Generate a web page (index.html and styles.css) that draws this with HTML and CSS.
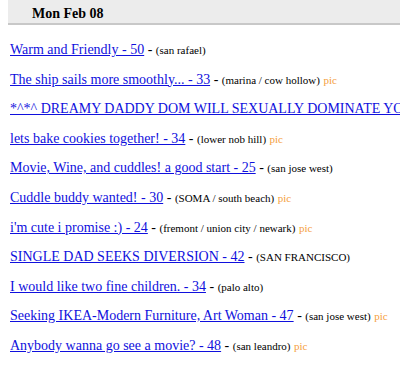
FILE: index.html
```html
<!DOCTYPE html>
<html lang="en">
<head>
    <meta charset="UTF-8">
    <title>Mon Feb 08</title>
    <link rel="stylesheet" href="styles.css">
</head>
<body>
    <h4 class="day">Mon Feb 08</h4>
    <div class="posts">
        <p class="row"><a href="#">Warm and Friendly - 50</a> - <span class="area">(san rafael)</span></p>
        <p class="row"><a href="#">The ship sails more smoothly... - 33</a> - <span class="area">(marina / cow hollow)</span> <span class="pic">pic</span></p>
        <p class="row"><a href="#">*^*^ DREAMY DADDY DOM WILL SEXUALLY DOMINATE YOU ^*^*</a></p>
        <p class="row"><a href="#">lets bake cookies together! - 34</a> - <span class="area">(lower nob hill)</span> <span class="pic">pic</span></p>
        <p class="row"><a href="#">Movie, Wine, and cuddles! a good start - 25</a> - <span class="area">(san jose west)</span></p>
        <p class="row"><a href="#">Cuddle buddy wanted! - 30</a> - <span class="area">(SOMA / south beach)</span> <span class="pic">pic</span></p>
        <p class="row"><a href="#">i'm cute i promise :) - 24</a> - <span class="area">(fremont / union city / newark)</span> <span class="pic">pic</span></p>
        <p class="row"><a href="#">SINGLE DAD SEEKS DIVERSION - 42</a> - <span class="area">(SAN FRANCISCO)</span></p>
        <p class="row"><a href="#">I would like two fine children. - 34</a> - <span class="area">(palo alto)</span></p>
        <p class="row"><a href="#">Seeking IKEA-Modern Furniture, Art Woman - 47</a> - <span class="area">(san jose west)</span> <span class="pic">pic</span></p>
        <p class="row"><a href="#">Anybody wanna go see a movie? - 48</a> - <span class="area">(san leandro)</span> <span class="pic">pic</span></p>
    </div>
</body>
</html>
```

FILE: styles.css
```css
body {
    margin: 0;
    font-family: "Liberation Serif", serif;
    font-size: 14px;
    color: #000;
    background: #fff;
    white-space: nowrap;
    overflow: hidden;
}

.day {
    margin: 0 0 0 8px;
    height: 23px;
    line-height: 27px;
    padding-left: 24px;
    background: #ececec;
    border-bottom: 2px solid #c8c8c8;
    font-size: 14px;
}

.posts {
    padding: 10px 0 0 10px;
}

.row {
    margin: 0;
    height: 29.6px;
    line-height: 29.6px;
}

.row a {
    color: #1010dd;
}

.area {
    font-size: 11px;
}

.pic {
    font-size: 11px;
    color: #f5a040;
}
```
